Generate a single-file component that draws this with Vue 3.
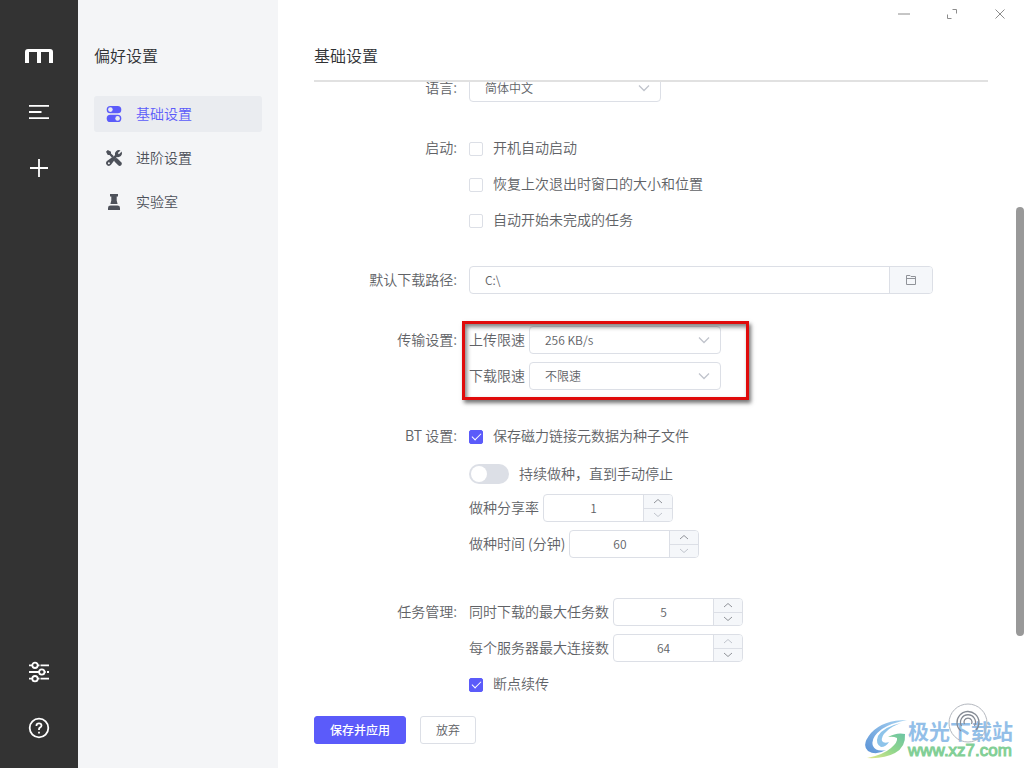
<script setup>
import { ref } from 'vue'

const menu = [
  { id: 'basic', text: '基础设置' },
  { id: 'advanced', text: '进阶设置' },
  { id: 'lab', text: '实验室' }
]
const current = ref('basic')
const locale = ref('简体中文')
const openAtLogin = ref(false)
const keepWindowState = ref(false)
const resumeAll = ref(false)
const dir = ref('C:\\')
const limits = ref([
  { id: 'upload', text: '上传限速', value: '256 KB/s' },
  { id: 'download', text: '下载限速', value: '不限速' }
])
const saveMetadata = ref(true)
const keepSeeding = ref(false)
const seeding = ref([
  { id: 'seed-ratio', text: '做种分享率', value: 1, min: 1, max: 100, dim: 'down' },
  { id: 'seed-time', text: '做种时间 (分钟)', value: 60, min: 60, max: 525600, dim: 'down' }
])
const tasks = ref([
  { id: 'max-tasks', text: '同时下载的最大任务数', value: 5, min: 1, max: 10, dim: '' },
  { id: 'max-conn', text: '每个服务器最大连接数', value: 64, min: 1, max: 64, dim: 'up' }
])
const resume = ref(true)

function step(item, delta) {
  item.value = Math.min(item.max, Math.max(item.min, item.value + delta))
}
</script>

<template>
  <div class="app">
    <aside class="rail">
      <nav class="rail-group" aria-label="主导航">
        <a href="#" class="logo" aria-label="Motrix">
          <svg width="28" height="14" viewBox="0 0 28 14">
            <path d="M0 14V3Q0 0 3 0H25Q28 0 28 3V14H24V3H16V14H12V3H4V14Z" fill="#fff" />
          </svg>
        </a>
        <button type="button" aria-label="任务列表">
          <svg width="24" height="24" viewBox="0 0 24 24" class="line">
            <path d="M2 5.8h20M2 12h12.5M2 18.2h20" />
          </svg>
        </button>
        <button type="button" aria-label="新建任务">
          <svg width="24" height="24" viewBox="0 0 24 24" class="line">
            <path d="M12 3v18M3 12h18" />
          </svg>
        </button>
      </nav>
      <nav class="rail-group" aria-label="其他">
        <button type="button" aria-label="偏好设置">
          <svg width="24" height="24" viewBox="0 0 24 24" class="line">
            <path d="M2 5.3h3.2M10.8 5.3h1.7M13.5 5.3h8.5M2 12h10M17.6 12h1M20 12h2M2 18.7h3.2M10.8 18.7h1.7M13.5 18.7h8.5" />
            <circle cx="8" cy="5.3" r="2.7" />
            <circle cx="14.8" cy="12" r="2.7" />
            <circle cx="8" cy="18.7" r="2.7" />
          </svg>
        </button>
        <button type="button" aria-label="帮助">
          <svg width="24" height="24" viewBox="0 0 24 24" class="line">
            <circle cx="12" cy="12" r="9.3" />
            <path d="M9.5 10V9.3Q9.6 7.3 12 7.3T14.5 9.5Q14.5 10.8 13.2 11.4T12 13.3V14" />
            <path d="M12 15.8v1.6" />
          </svg>
        </button>
      </nav>
    </aside>

    <aside class="subnav">
      <h2>偏好设置</h2>
      <ul>
        <li v-for="m in menu" :key="m.id">
          <a href="#" :class="{ active: current === m.id }" @click.prevent="current = m.id">
            <svg v-if="m.id === 'basic'" width="20" height="20" viewBox="0 0 20 20">
              <rect x="2.7" y="2" width="14.6" height="7.3" rx="3.6" fill="currentColor" />
              <rect x="2.7" y="10.7" width="14.6" height="7.3" rx="3.6" fill="currentColor" />
              <circle cx="6.4" cy="5.6" r="2.3" fill="#eaecf0" />
              <circle cx="13.6" cy="14.4" r="2.3" fill="#eaecf0" />
            </svg>
            <svg v-else-if="m.id === 'advanced'" width="20" height="20" viewBox="0 0 20 20">
              <path d="M2 3.8L3.8 2L7 3.8V5.5L9.7 8L8 9.7L5.5 7H3.8Z" fill="currentColor" />
              <path d="M12.2 12.2L15.7 15.7" stroke="currentColor" stroke-width="4.2" stroke-linecap="round" />
              <path d="M16.5 2.4L13.8 5.1L14.9 6.2L17.7 3.5Q18.7 6.2 16.9 8Q15.2 9.6 12.8 9L7.2 16.6Q5.6 18.6 3.4 17.6Q1.2 15.9 2.5 13.6L3.3 12.7L11 7.2Q10.4 4.9 12.1 3.2Q14 1.5 16.5 2.4Z" fill="currentColor" />
              <circle cx="4.9" cy="15.3" r="1" fill="#f4f5f7" />
            </svg>
            <svg v-else width="20" height="20" viewBox="0 0 20 20">
              <path d="M6 2H14V4.4H12.7V8.5L13.6 12H6.4L7.3 8.5V4.4H6Z" fill="currentColor" />
              <path d="M4 18V16Q4 13.6 6.5 13.6H13.5Q16 13.6 16 16V18Z" fill="currentColor" />
            </svg>
            <span>{{ m.text }}</span>
          </a>
        </li>
      </ul>
    </aside>

    <main class="main">
      <div class="win">
        <button type="button" aria-label="最小化">
          <svg width="12" height="12" viewBox="0 0 12 12"><path d="M0 6H12" /></svg>
        </button>
        <button type="button" aria-label="最大化">
          <svg width="12" height="12" viewBox="0 0 12 12"><path d="M6.5 1.5H10.5V5.5M1.5 6.5V10.5H5.5" /></svg>
        </button>
        <button type="button" aria-label="关闭">
          <svg width="12" height="12" viewBox="0 0 12 12"><path d="M1.5 1.5L10.5 10.5M10.5 1.5L1.5 10.5" /></svg>
        </button>
      </div>
      <header class="head"><h1>基础设置</h1></header>

      <form class="panel" @submit.prevent>
        <div class="scroll">
          <div class="fields">
            <section class="item">
              <label class="name" for="locale">语言:</label>
              <div class="body">
                <div class="row">
                  <span class="select">
                    <select id="locale" v-model="locale"><option>简体中文</option></select>
                    <svg width="12" height="8" viewBox="0 0 12 8"><path d="M1 1.5L6 6.5L11 1.5" /></svg>
                  </span>
                </div>
              </div>
            </section>

            <section class="item">
              <span class="name">启动:</span>
              <div class="body">
                <div class="row"><label class="check"><input v-model="openAtLogin" type="checkbox" />开机自动启动</label></div>
                <div class="row"><label class="check"><input v-model="keepWindowState" type="checkbox" />恢复上次退出时窗口的大小和位置</label></div>
                <div class="row"><label class="check"><input v-model="resumeAll" type="checkbox" />自动开始未完成的任务</label></div>
              </div>
            </section>

            <section class="item">
              <label class="name" for="dir">默认下载路径:</label>
              <div class="body">
                <div class="row">
                  <div class="path">
                    <input id="dir" v-model="dir" type="text" />
                    <button type="button" aria-label="选择文件夹">
                      <svg width="12" height="12" viewBox="0 0 12 12"><path d="M1.5 10.5V1.5H5L6 2.5H10.5V10.5ZM1.5 4.5H10.5" /></svg>
                    </button>
                  </div>
                </div>
              </div>
            </section>

            <section class="item">
              <span class="name">传输设置:</span>
              <div class="body marked">
                <div v-for="l in limits" :key="l.id" class="row">
                  <label :for="l.id">{{ l.text }}</label>
                  <span class="select">
                    <select :id="l.id" v-model="l.value"><option>{{ l.value }}</option></select>
                    <svg width="12" height="8" viewBox="0 0 12 8"><path d="M1 1.5L6 6.5L11 1.5" /></svg>
                  </span>
                </div>
              </div>
            </section>

            <section class="item bt">
              <span class="name">BT 设置:</span>
              <div class="body">
                <div class="row"><label class="check"><input v-model="saveMetadata" type="checkbox" />保存磁力链接元数据为种子文件</label></div>
                <div class="row toggle"><label class="check"><input v-model="keepSeeding" type="checkbox" role="switch" class="switch" />持续做种，直到手动停止</label></div>
                <div v-for="n in seeding" :key="n.id" class="row">
                  <label :for="n.id">{{ n.text }}</label>
                  <span class="number">
                    <input :id="n.id" v-model.number="n.value" type="number" />
                    <span class="steps">
                      <button type="button" aria-label="增加" :class="{ dim: n.dim === 'up' }" @click="step(n, 1)">
                        <svg width="10" height="6" viewBox="0 0 10 6"><path d="M1 5L5 1.5L9 5" /></svg>
                      </button>
                      <button type="button" aria-label="减少" :class="{ dim: n.dim === 'down' }" @click="step(n, -1)">
                        <svg width="10" height="6" viewBox="0 0 10 6"><path d="M1 1L5 4.5L9 1" /></svg>
                      </button>
                    </span>
                  </span>
                </div>
              </div>
            </section>

            <section class="item">
              <span class="name">任务管理:</span>
              <div class="body">
                <div v-for="n in tasks" :key="n.id" class="row">
                  <label :for="n.id">{{ n.text }}</label>
                  <span class="number">
                    <input :id="n.id" v-model.number="n.value" type="number" />
                    <span class="steps">
                      <button type="button" aria-label="增加" :class="{ dim: n.dim === 'up' }" @click="step(n, 1)">
                        <svg width="10" height="6" viewBox="0 0 10 6"><path d="M1 5L5 1.5L9 5" /></svg>
                      </button>
                      <button type="button" aria-label="减少" :class="{ dim: n.dim === 'down' }" @click="step(n, -1)">
                        <svg width="10" height="6" viewBox="0 0 10 6"><path d="M1 1L5 4.5L9 1" /></svg>
                      </button>
                    </span>
                  </span>
                </div>
                <div class="row"><label class="check"><input v-model="resume" type="checkbox" />断点续传</label></div>
              </div>
            </section>
          </div>
        </div>
        <footer class="actions">
          <button type="submit" class="primary">保存并应用</button>
          <button type="button">放弃</button>
        </footer>
      </form>
      <div class="thumb"></div>

      <div class="brand">
        <svg width="44" height="42" viewBox="0 0 44 42">
          <defs>
            <linearGradient id="sky" x1="0" y1="1" x2="1" y2="0">
              <stop offset="0" stop-color="#5a92d6" /><stop offset="1" stop-color="#a9d4f2" />
            </linearGradient>
            <linearGradient id="leaf" x1="0" y1="1" x2="1" y2="0">
              <stop offset="0" stop-color="#e3e88a" /><stop offset="0.5" stop-color="#90d68c" /><stop offset="1" stop-color="#6cc4a4" />
            </linearGradient>
          </defs>
          <path d="M43 1Q19 1 7 14Q-3 26 4 32Q12 37 22 31Q12 33 9 27Q6 19 18 10Q27 4 43 1Z" fill="url(#sky)" />
          <path d="M37 4Q19 8 14 17Q11 25 17 28Q22 28 25 23Q20 25 18 22Q17 17 23 12Q28 7 37 4Z" fill="#8ec4ea" />
          <path d="M24 18Q33 13 41 15Q42 28 31 34Q20 40 3 39Q19 36 27 29Q34 23 33 19Q29 17 24 18Z" fill="url(#leaf)" />
        </svg>
        <div class="brand-text">
          <strong>极光下载站</strong>
          <span>www.xz7.com</span>
        </div>
      </div>
      <button type="button" class="float" aria-label="悬浮窗">
        <svg width="40" height="40" viewBox="0 0 40 40">
          <circle cx="20" cy="20" r="19" />
          <path d="M13 28A11 11 0 1 1 28 27M13.5 23A7.5 7.5 0 1 1 26.5 23M16.5 21A4 4 0 1 1 23.5 21" class="waves" />
        </svg>
      </button>
    </main>
  </div>
</template>

<style>
body {
  margin: 0;
  background: #fff;
}
</style>

<style scoped>
* {
  box-sizing: border-box;
}
.app {
  display: flex;
  height: 100vh;
  min-height: 640px;
  overflow: hidden;
  font: 14px/20px "Noto Sans CJK SC", sans-serif;
  font-weight: 350;
  color: #606266;
  background: #fff;
}
button,
input,
select {
  font: inherit;
  color: inherit;
  margin: 0;
  padding: 0;
  border: 0;
  background: none;
  outline: none;
}
svg {
  display: block;
  fill: none;
}
.rail {
  flex: none;
  width: 78px;
  padding: 44px 0 28px;
  background: #333;
  display: flex;
  flex-direction: column;
  justify-content: space-between;
}
.rail-group {
  display: flex;
  flex-direction: column;
  align-items: center;
  gap: 32px;
}
.rail-group button,
.logo {
  height: 24px;
  display: flex;
  align-items: center;
}
.line {
  stroke: #fff;
  stroke-width: 1.8;
}
.subnav {
  flex: none;
  width: 200px;
  padding: 44px 16px;
  background: #f4f5f7;
}
h1,
h2 {
  margin: 0;
  padding-bottom: 2px;
  font-size: 16px;
  line-height: 22px;
  font-weight: 350;
  color: #303133;
}
.subnav ul {
  list-style: none;
  margin: 28px 0 0;
  padding: 0;
  display: flex;
  flex-direction: column;
  gap: 8px;
}
.subnav a {
  height: 36px;
  padding: 0 10px;
  display: flex;
  align-items: center;
  gap: 12px;
  border-radius: 3px;
  color: #4d515a;
  text-decoration: none;
}
.subnav a.active {
  color: #5b5bfa;
  background: #eaecf0;
}
.subnav span,
.row label {
  padding-bottom: 2px;
}
.main {
  position: relative;
  flex: 1;
  min-width: 0;
  display: flex;
  flex-direction: column;
}
.win {
  position: absolute;
  top: 0;
  right: 0;
  display: flex;
}
.win button {
  width: 48px;
  height: 28px;
  display: grid;
  place-items: center;
}
.win svg {
  stroke: #8c8c8c;
}
.head {
  flex: none;
  margin: 0 36px;
  padding: 44px 0 12px;
  border-bottom: 2px solid #e1e1e1;
}
.panel {
  flex: 1;
  min-height: 0;
  margin: 0 36px;
  display: flex;
  flex-direction: column;
}
.scroll {
  flex: 1;
  min-height: 0;
  overflow: hidden;
}
.fields {
  margin-top: -12px;
  padding-right: 55px;
  display: flex;
  flex-direction: column;
  gap: 24px;
}
.item {
  display: grid;
  grid-template-columns: 143px minmax(0, 1fr);
  column-gap: 12px;
}
.name {
  line-height: 34px;
  text-align: right;
}
.row {
  height: 36px;
  display: flex;
  align-items: center;
  gap: 4px;
}
.row.toggle {
  padding-top: 4px;
}
.bt {
  padding-bottom: 8px;
}
.check {
  display: flex;
  align-items: center;
  gap: 10px;
}
.check input {
  appearance: none;
  width: 14px;
  height: 14px;
  margin-top: 4px;
  border: 1px solid #dcdfe6;
  border-radius: 2px;
  display: grid;
  place-items: center;
}
.check input:checked {
  border-color: #5b5bfa;
  background: #5b5bfa;
}
.check input:checked::after {
  content: "";
  width: 8px;
  height: 4px;
  margin-bottom: 3px;
  border: solid #fff;
  border-width: 0 0 1px 1px;
  transform: rotate(-45deg);
}
.check .switch {
  width: 40px;
  height: 20px;
  margin-top: 2px;
  border: 0;
  border-radius: 10px;
  background: #dcdfe6;
  padding: 2px;
  place-items: center start;
}
.check .switch::before {
  content: "";
  width: 16px;
  height: 16px;
  border-radius: 50%;
  background: #fff;
}
.check .switch:checked {
  place-items: center end;
}
.check .switch:checked::after {
  display: none;
}
.select {
  position: relative;
  width: 192px;
}
.select select {
  appearance: none;
  display: block;
  width: 100%;
  height: 28px;
  padding: 0 32px 0 15px;
  border: 1px solid #dcdfe6;
  border-radius: 4px;
  font-size: 12px;
}
.select svg {
  position: absolute;
  right: 11px;
  top: 10px;
  stroke: #c0c4cc;
  stroke-width: 1.3;
  pointer-events: none;
}
.path {
  flex: 1;
  display: flex;
  height: 28px;
  border: 1px solid #dcdfe6;
  border-radius: 4px;
  overflow: hidden;
}
.path input {
  flex: 1;
  min-width: 0;
  padding: 0 15px;
  font-size: 12px;
}
.path button {
  width: 43px;
  display: grid;
  place-items: center;
  border-left: 1px solid #dcdfe6;
  background: #f5f7fa;
}
.path svg {
  stroke: #909399;
}
.marked {
  position: relative;
}
.marked::after {
  content: "";
  position: absolute;
  inset: -1px 184px -6px -7px;
  border: 3px solid #e00b0b;
  box-shadow: 2px 3px 4px rgba(0, 0, 0, 0.55), inset 2px 3px 4px rgba(0, 0, 0, 0.5);
  pointer-events: none;
}
.number {
  display: flex;
  width: 130px;
  height: 28px;
  border: 1px solid #dcdfe6;
  border-radius: 4px;
  overflow: hidden;
}
.number input {
  appearance: textfield;
  flex: 1;
  min-width: 0;
  font-size: 12px;
  text-align: center;
}
.number input::-webkit-inner-spin-button {
  appearance: none;
  margin: 0;
}
.steps {
  width: 29px;
  display: flex;
  flex-direction: column;
  border-left: 1px solid #dcdfe6;
  background: #f5f7fa;
}
.steps button {
  flex: 1;
  display: grid;
  place-items: center;
}
.steps button + button {
  border-top: 1px solid #dcdfe6;
}
.steps svg {
  stroke: #909399;
}
.steps .dim svg {
  stroke: #c0c4cc;
}
.actions {
  flex: none;
  padding: 14px 0 24px;
  display: flex;
  gap: 14px;
}
.actions button {
  height: 28px;
  padding: 0 15px;
  border: 1px solid #dcdfe6;
  border-radius: 3px;
  background: #fff;
  font-size: 12px;
}
.actions .primary {
  border-color: #5b5bfa;
  background: #5b5bfa;
  color: #fff;
  font-weight: 500;
}
.thumb {
  position: absolute;
  top: 207px;
  right: 0;
  width: 8px;
  height: 429px;
  border-radius: 4px;
  background: #999;
}
.brand {
  position: absolute;
  right: 11px;
  bottom: 7px;
  display: flex;
  align-items: center;
}
.brand-text {
  display: flex;
  flex-direction: column;
}
.brand strong {
  font-size: 21px;
  line-height: 22px;
  font-weight: 700;
  color: #93bfe8;
}
.brand-text span {
  font-family: "Liberation Sans", sans-serif;
  font-size: 17px;
  line-height: 20px;
  -webkit-text-stroke: 1px #82cf96;
  color: #82cf96;
}
.float {
  position: absolute;
  right: 36px;
  bottom: 25px;
}
.float svg {
  stroke: #b4b8bf;
}
.float .waves {
  stroke: #858b95;
  stroke-width: 1.3;
}
</style>
